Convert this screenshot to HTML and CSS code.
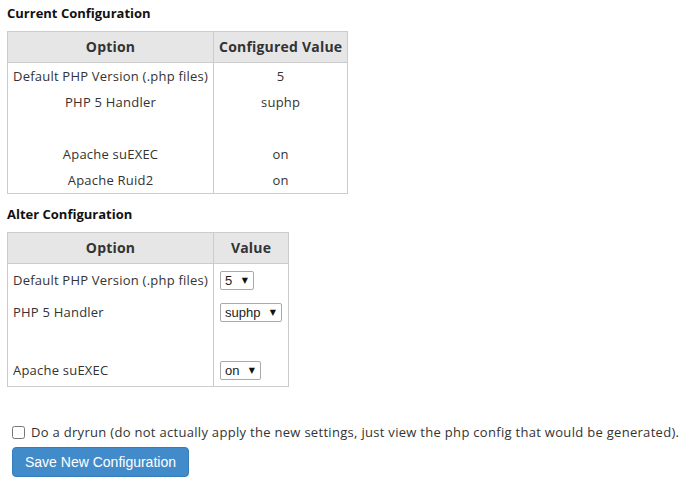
FILE: index.html
```html
<!DOCTYPE html>
<html>
<head>
<meta charset="utf-8">
<link rel="stylesheet" href="styles.css">
</head>
<body>
<div class="page">
  <h4 class="title">Current Configuration</h4>
  <table class="cfg centered">
    <thead>
      <tr><th class="c1">Option</th><th>Configured Value</th></tr>
    </thead>
    <tbody>
      <tr><td>Default PHP Version (.php files)</td><td>5</td></tr>
      <tr><td>PHP 5 Handler</td><td>suphp</td></tr>
      <tr><td>&nbsp;</td><td>&nbsp;</td></tr>
      <tr><td>Apache suEXEC</td><td>on</td></tr>
      <tr><td>Apache Ruid2</td><td>on</td></tr>
    </tbody>
  </table>

  <h4 class="title title2">Alter Configuration</h4>
  <table class="cfg alter">
    <thead>
      <tr><th class="c1">Option</th><th>Value</th></tr>
    </thead>
    <tbody>
      <tr class="selrow"><td>Default PHP Version (.php files)</td><td class="selcell"><span class="sel"><select><option>5</option></select></span></td></tr>
      <tr class="selrow"><td>PHP 5 Handler</td><td class="selcell"><span class="sel"><select><option>suphp</option></select></span></td></tr>
      <tr><td>&nbsp;</td><td>&nbsp;</td></tr>
      <tr class="selrow"><td>Apache suEXEC</td><td class="selcell"><span class="sel"><select><option>on</option></select></span></td></tr>
    </tbody>
  </table>

  <div class="actions">
    <label class="dry"><input type="checkbox"> Do a dryrun (do not actually apply the new settings, just view the php config that would be generated).</label>
    <button class="btn">Save New Configuration</button>
  </div>
</div>
</body>
</html>
```

FILE: styles.css
```css
html, body {
  margin: 0;
  padding: 0;
  background: #fff;
}
.page {
  padding: 6px 7px;
  font-family: "Open Sans", "DejaVu Sans", sans-serif;
  font-size: 13px;
  letter-spacing: 0.22px;
  color: #333;
}
.title {
  font-size: 13px;
  font-weight: bold;
  letter-spacing: 0;
  color: #111;
  margin: 0 0 10px 0;
  line-height: 15px;
}
.title2 {
  margin-top: 13px;
}
.cfg {
  border-collapse: collapse;
  border: 1px solid #ccc;
}
.cfg th {
  background: #e6e6e6;
  font-weight: bold;
  font-size: 14px;
  letter-spacing: 0.2px;
  color: #333;
  padding: 7px 5px;
  line-height: 16px;
  border: 1px solid #ccc;
  text-align: center;
}
.cfg td {
  padding: 4px 5px;
  line-height: 18px;
  border-left: 1px solid #ccc;
  border-right: 1px solid #ccc;
  white-space: nowrap;
}
.centered td {
  text-align: center;
}
.alter td {
  text-align: left;
  vertical-align: middle;
}
.alter .selrow td {
  padding: 6px 5px;
  height: 20px;
}
.alter .selrow .selcell {
  padding-left: 6px;
  padding-right: 6px;
}
.sel {
  position: relative;
  display: inline-block;
  vertical-align: middle;
}
.sel select {
  appearance: none;
  -webkit-appearance: none;
  font-family: "Liberation Sans", Arial, sans-serif;
  font-size: 13px;
  letter-spacing: 0;
  color: #222;
  background: #fff;
  border: 1px solid #a9a9a9;
  border-radius: 2px;
  height: 19px;
  padding: 0 20px 0 4px;
  margin: 0;
  line-height: 17px;
}
.sel::after {
  content: "\25BC";
  position: absolute;
  right: 6px;
  top: 4px;
  font-size: 8px;
  line-height: 10px;
  color: #111;
  pointer-events: none;
}
.actions {
  margin-top: 36px;
  padding-left: 5px;
}
.dry {
  display: flex;
  align-items: center;
  gap: 6px;
  font-size: 13px;
  letter-spacing: 0.3px;
  line-height: 18px;
  white-space: nowrap;
}
.dry input {
  margin: 0;
  width: 13px;
  height: 13px;
}
.btn {
  margin-top: 6px;
  background: #428bca;
  color: #fff;
  border: 1px solid #357ebd;
  border-radius: 4px;
  font-family: "Liberation Sans", Arial, sans-serif;
  font-size: 14px;
  letter-spacing: 0;
  padding: 5px 12px;
  line-height: 18px;
  white-space: nowrap;
}
```
